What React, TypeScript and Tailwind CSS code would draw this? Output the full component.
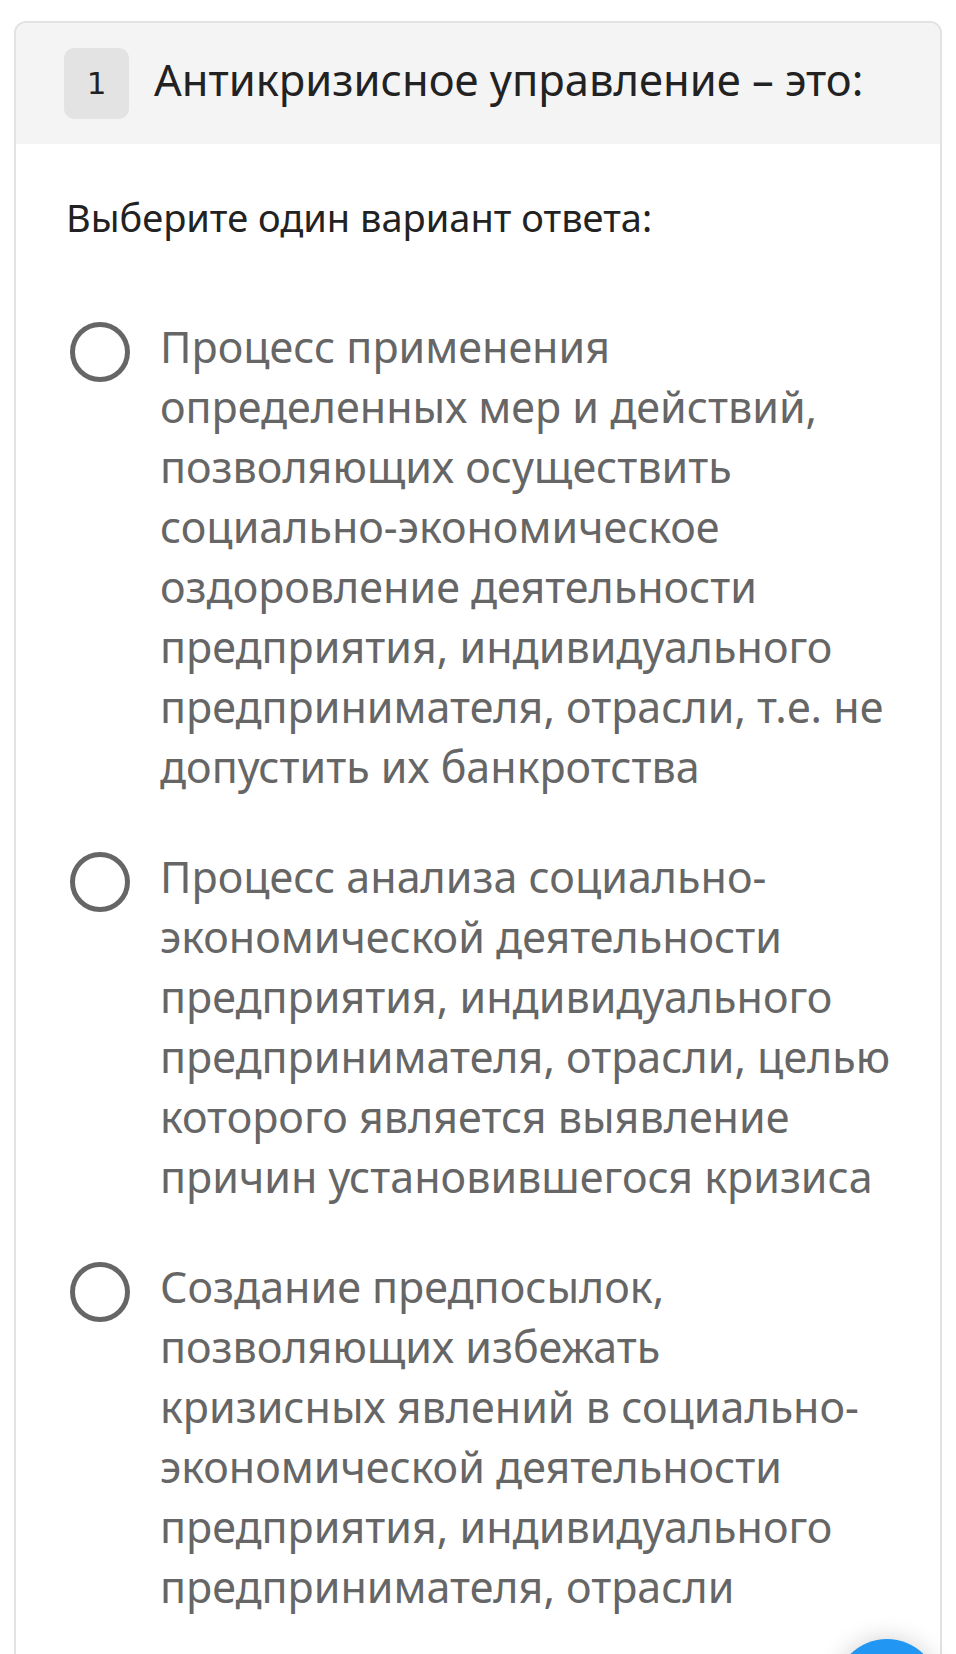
import React from 'react';

const options = [
    'Процесс применения определенных мер и действий, позволяющих осуществить социально-экономическое оздоровление деятельности предприятия, индивидуального предпринимателя, отрасли, т.е. не допустить их банкротства',
    'Процесс анализа социально-экономической деятельности предприятия, индивидуального предпринимателя, отрасли, целью которого является выявление причин установившегося кризиса',
    'Создание предпосылок, позволяющих избежать кризисных явлений в социально-экономической деятельности предприятия, индивидуального предпринимателя, отрасли',
];

export default function App() {
    return (
        <div
            className="relative bg-white w-[956px] h-[1654px] overflow-hidden pt-[21px] px-[14px]"
            style={{ fontFamily: '"Noto Sans", "Open Sans", sans-serif' }}
        >
            <div className="border-2 border-[#e2e2e2] rounded-[12px] overflow-hidden h-[1700px]">
                {/* шапка вопроса */}
                <div className="bg-[#f4f4f4] flex items-center pl-[48px] h-[121px]">
                    <div className="w-[65px] h-[71px] rounded-[10px] bg-[#e3e3e3] flex items-center justify-center text-[31px] text-[#222]" style={{ fontFamily: '"DejaVu Sans", sans-serif' }}>
                        1
                    </div>
                    <h1 className="ml-[25px] mb-[8px] text-[43.5px] text-[#222] leading-none whitespace-nowrap">Антикризисное управление – это:</h1>
                </div>
                <div className="pl-[50px] pr-[45px] pt-[46px]">
                    <p className="text-[38px] text-[#222] leading-[54px]">Выберите один вариант ответа:</p>
                    <div className="mt-[73px] flex flex-col gap-[50px]">
                        {options.map((text, i) => (
                            <div key={i} className="flex items-start">
                                <div className="mt-[5px] ml-[4px] w-[60px] h-[60px] rounded-full border-[5px] border-[#666] shrink-0" />
                                <p className="ml-[30px] text-[43px] leading-[60px] text-[#666]">{text}</p>
                            </div>
                        ))}
                    </div>
                </div>
            </div>
            <div className="absolute left-[835px] top-[1639px] w-[104px] h-[104px] rounded-full bg-[#2196f3] shadow-[0_0_24px_rgba(0,0,0,0.18)]" />
        </div>
    );
}
